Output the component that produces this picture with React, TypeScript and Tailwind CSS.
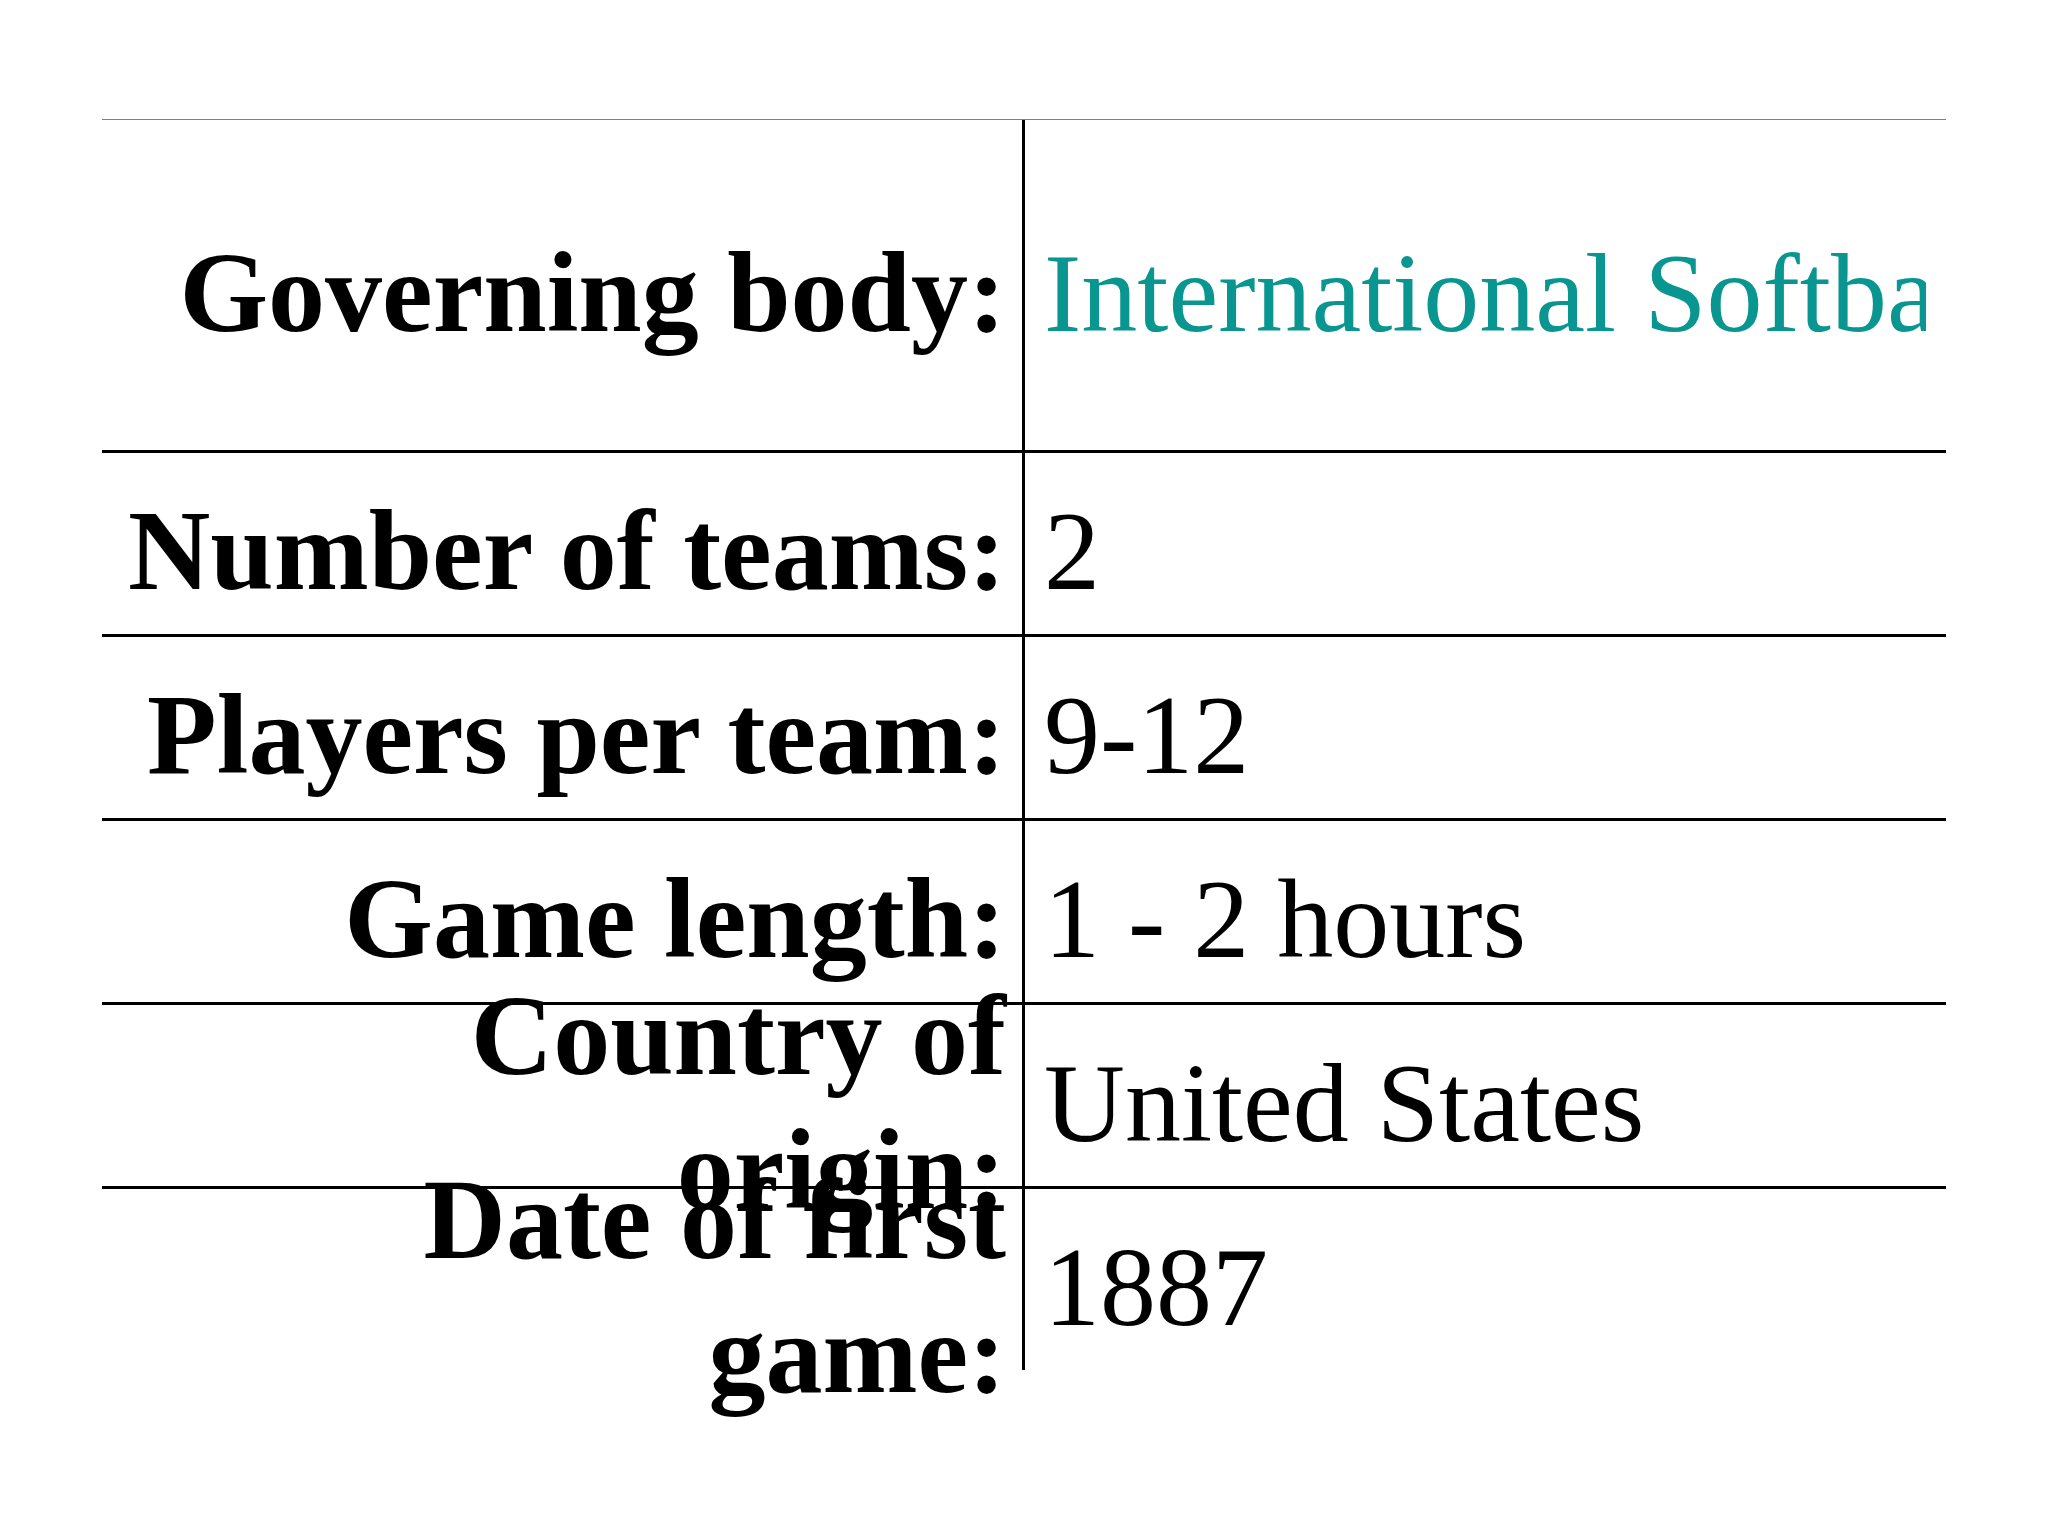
const rows = [
  { label: 'Governing body:', value: 'International Softball Federation', link: true },
  { label: 'Number of teams:', value: '2' },
  { label: 'Players per team:', value: '9-12' },
  { label: 'Game length:', value: '1 - 2 hours' },
  { label: 'Country of origin:', value: 'United States' },
  { label: 'Date of first game:', value: '1887' },
]

export default function App() {
  return (
    <div className="min-h-screen bg-white px-[102px] pt-[119px] font-['Liberation_Serif','Times_New_Roman',serif] text-black">
      <div className="border-t border-[#808080]">
        {rows.map((row, i) => (
          <div
            key={row.label}
            className={i === 0 ? 'flex h-[330px]' : 'flex h-[184px] border-t-[3px] border-black'}
          >
            {/* Label */}
            <div className="flex w-[920px] shrink-0 items-center justify-end pt-[15px] pr-4 pl-[18px]">
              <div className="text-right text-[114px] leading-[134px] font-bold">{row.label}</div>
            </div>

            {/* Value */}
            <div className="flex min-w-0 flex-1 items-center border-l-[3px] border-black pt-[15px] pr-5 pl-[19px]">
              <div
                className={
                  row.link
                    ? 'overflow-hidden whitespace-nowrap text-[112px] leading-[134px] text-[#0a9690]'
                    : 'overflow-hidden whitespace-nowrap text-[112px] leading-[134px]'
                }
              >
                {row.value}
              </div>
            </div>
          </div>
        ))}
      </div>
    </div>
  )
}
